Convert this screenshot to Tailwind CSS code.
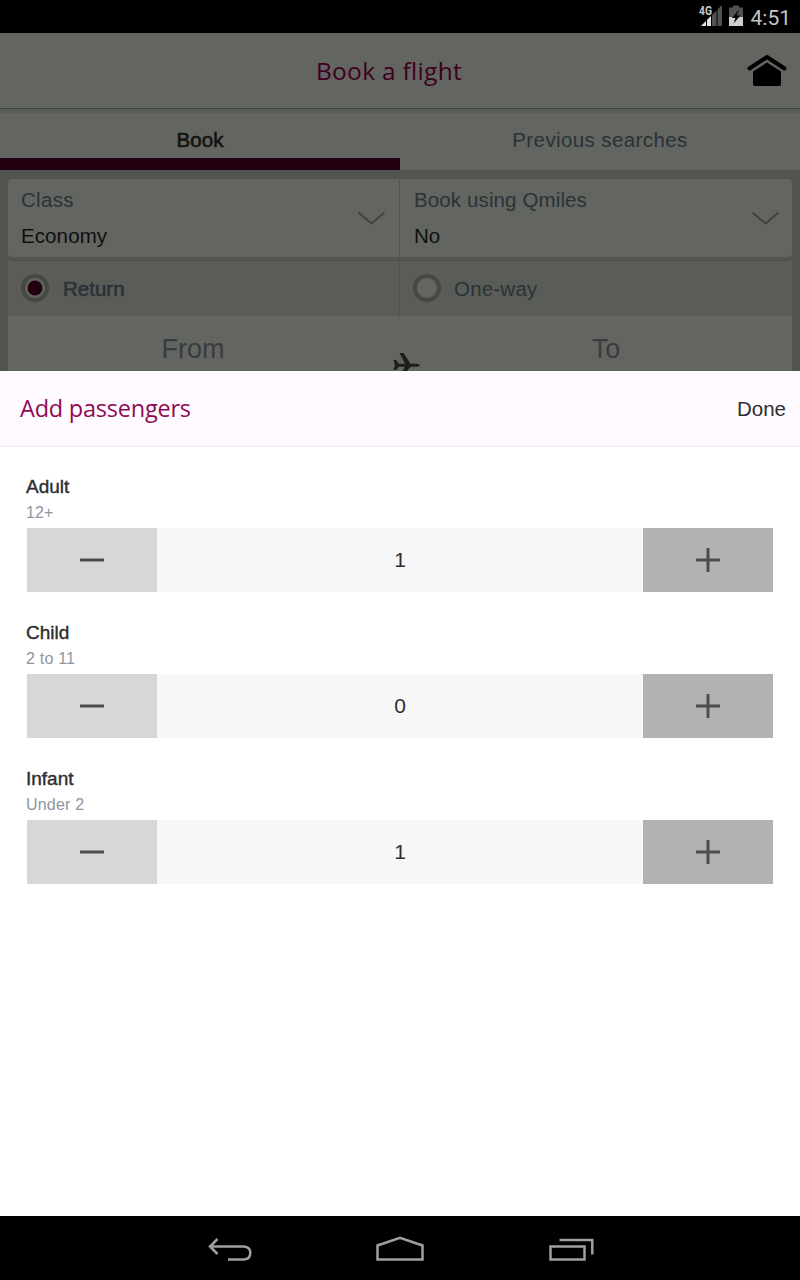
<!DOCTYPE html>
<html lang="en">
<head>
<meta charset="utf-8">
<title>Book a flight</title>
<script src="https://cdn.jsdelivr.net/npm/@tailwindcss/browser@4"></script>
</head>
<body class="bg-black">
<div class="flex h-[1280px] w-[800px] flex-col overflow-hidden bg-white font-['Liberation_Sans',sans-serif] whitespace-nowrap">
  <!-- Status bar -->
  <div class="flex h-[33px] shrink-0 items-center justify-end bg-black pr-[9px]">
    <svg class="h-[33px] w-[48px]" viewBox="696 0 48 33">
      <path d="M722 5V26H701Z" fill="#505250"/>
      <path d="M711 16V26H701Z" fill="#e4e4e4"/>
      <path d="M706.5 15V26M711.5 12V26M717 7V26" stroke="#000" stroke-width="1" fill="none"/>
      <path d="M697 4H712V15.500H697Z" fill="#000"/>
      <text x="699" y="15" font-family="Roboto" font-size="12" font-weight="700" fill="#c8c8c8" textLength="13" lengthAdjust="spacingAndGlyphs">4G</text>
      <path d="M729 7.500H733V5.500H739V7.500H743V17H729Z" fill="#505250"/>
      <path d="M729 17H743V26H729Z" fill="#d0d0d0"/>
      <path d="M738.500 10L732 18H735.500L733.500 23.500L740.500 15.500H736.500L739 10Z" fill="#000"/>
    </svg>
    <span class="ml-[7px] pt-[3px] font-['Roboto'] text-[21px] leading-[33px] text-[#c5c5c5]">4:51</span>
  </div>

  <!-- Booking page, dimmed behind the sheet -->
  <div class="flex h-[338px] shrink-0 flex-col overflow-hidden bg-[#525450]">
    <header class="grid h-[76px] shrink-0 grid-cols-[1fr_auto_1fr] items-center border-b border-[#3e443c] bg-[#636561]">
      <span></span>
      <h1 class="pr-[22px] font-['Open_Sans'] text-[24.5px] leading-[74px] tracking-[0.3px] text-[#3e001e]">Book a flight</h1>
      <svg class="mr-[13px] h-[34px] w-[40px] justify-self-end" viewBox="747 54 40 34">
        <path d="M749.500 68.500L767 57L784.500 68.500" fill="none" stroke="#000" stroke-width="4" stroke-linecap="round" stroke-linejoin="round"/>
        <path d="M767 62.500L781 71.500V84Q781 86 779 86H755Q753 86 753 84V71.500Z" fill="#000"/>
      </svg>
    </header>
    <nav class="grid h-[61px] shrink-0 grid-cols-2 border-t-4 border-[#5a5f58] bg-[#636561] text-center text-[20.500px] leading-[53px]">
      <div class="h-[57px] border-b-[12px] border-[#22000f] tracking-[0.1px] text-[#121412] [-webkit-text-stroke:0.6px_#121412]">Book</div>
      <div class="tracking-[0.4px] text-[#2a3337]">Previous searches</div>
    </nav>
    <div class="flex flex-col gap-[4px] px-[8px] pt-[9px]">
      <div class="grid h-[78px] grid-cols-[392px_392px] rounded-[4px] bg-[#636561] text-[20.500px]">
        <div class="flex items-center justify-between border-r border-[#525450] pr-[13px] pl-[13px]">
          <div>
            <div class="leading-[36px] tracking-[0.3px] text-[#2a3337]">Class</div>
            <div class="leading-[36px] tracking-[0.1px] text-[#0e100e]">Economy</div>
          </div>
          <svg class="h-[14px] w-[28px]" viewBox="0 0 28 14"><path d="M0.500 1.500L13.500 12.500L26.500 1.500" fill="none" stroke="#40423f" stroke-width="2"/></svg>
        </div>
        <div class="flex items-center justify-between pr-[13px] pl-[14px]">
          <div>
            <div class="leading-[36px] tracking-[0.12px] text-[#2a3337]">Book using Qmiles</div>
            <div class="leading-[36px] text-[#0e100e]">No</div>
          </div>
          <svg class="h-[14px] w-[28px]" viewBox="0 0 28 14"><path d="M1.500 1.500L14.500 12.500L27.500 1.500" fill="none" stroke="#40423f" stroke-width="2"/></svg>
        </div>
      </div>
      <div>
        <div class="grid h-[55px] grid-cols-[392px_392px] bg-[#5a5c57] text-[20.500px] leading-[56px] text-[#2a3337]">
          <div class="flex items-start border-r border-[#525450] pl-[13px]">
            <svg class="mt-[13px] size-[28px]" viewBox="0 0 28 28"><circle cx="14" cy="14" r="12" fill="#636561" stroke="#464844" stroke-width="4"/><circle cx="14" cy="14" r="7.500" fill="#22000f"/></svg>
            <span class="ml-[14px] [-webkit-text-stroke:0.6px_#2a3337]">Return</span>
          </div>
          <div class="flex items-start pl-[13px]">
            <svg class="mt-[13px] size-[28px]" viewBox="0 0 28 28"><circle cx="14" cy="14" r="12" fill="#636561" stroke="#464844" stroke-width="4"/></svg>
            <span class="ml-[13px] tracking-[0.2px]">One-way</span>
          </div>
        </div>
        <div class="grid h-[70px] grid-cols-[370px_56px_358px] bg-[#636561] text-center text-[27px] leading-[66px] text-[#3a3b42]">
          <span>From</span>
          <svg class="mt-[35px] ml-[14px] h-[28px] w-[28px]" viewBox="0 0 28 28"><path d="M1.500 9H4L7 12.700H13L7.500 2H11.500L18.500 12.700H25Q28 13.500 28 14.200Q28 15 25 15.700H18.500L10.500 26H7.500L13 15.700H7L4 19H1.500L3 14.200Z" fill="#1c1f1c"/></svg>
          <span class="pr-[14px]">To</span>
        </div>
      </div>
    </div>
  </div>

  <!-- Passenger sheet -->
  <section class="flex h-[845px] shrink-0 flex-col bg-white">
    <div class="flex h-[76px] items-start justify-between border-b border-[#ece8ee] bg-[#fefaff] pr-[14px] pl-[20px]">
      <h2 class="font-['Open_Sans'] text-[23.500px] leading-[74px] tracking-[-0.22px] text-[#8e0a55]">Add passengers</h2>
      <span class="text-[20.500px] leading-[75px] text-[#2e2e30]">Done</span>
    </div>
    <div class="flex flex-col gap-[24px] px-[27px] pt-[23px]">
      <div>
        <div class="-ml-px h-[31px] text-[19px] leading-[33px] text-[#2e2e30] [-webkit-text-stroke:0.4px_#2e2e30]">Adult</div>
        <div class="-ml-px h-[27px] text-[16px] leading-[24px] tracking-[0.1px] text-[#8f96a1]">12+</div>
        <div class="grid h-[64px] grid-cols-[130px_1fr_130px] items-stretch">
          <div class="grid place-items-center bg-[#d7d7d7]"><svg class="size-[24px]" viewBox="0 0 24 24"><path d="M0 12H24" stroke="#4c4c4c" stroke-width="3"/></svg></div>
          <div class="bg-[#f7f7f7] text-center text-[21px] leading-[64px] text-[#2e2e30]">1</div>
          <div class="grid place-items-center bg-[#b4b1b4]"><svg class="size-[24px]" viewBox="0 0 24 24"><path d="M0 12H24M12 0V24" stroke="#4c4e4b" stroke-width="3"/></svg></div>
        </div>
      </div>
      <div>
        <div class="-ml-px h-[31px] text-[19px] leading-[33px] text-[#2e2e30] [-webkit-text-stroke:0.4px_#2e2e30]">Child</div>
        <div class="-ml-px h-[27px] text-[16px] leading-[24px] tracking-[0.2px] text-[#8f96a1]">2 to 11</div>
        <div class="grid h-[64px] grid-cols-[130px_1fr_130px] items-stretch">
          <div class="grid place-items-center bg-[#d7d7d7]"><svg class="size-[24px]" viewBox="0 0 24 24"><path d="M0 12H24" stroke="#4c4c4c" stroke-width="3"/></svg></div>
          <div class="bg-[#f7f7f7] text-center text-[21px] leading-[64px] text-[#2e2e30]">0</div>
          <div class="grid place-items-center bg-[#b4b1b4]"><svg class="size-[24px]" viewBox="0 0 24 24"><path d="M0 12H24M12 0V24" stroke="#4c4e4b" stroke-width="3"/></svg></div>
        </div>
      </div>
      <div>
        <div class="-ml-px h-[31px] text-[19px] leading-[33px] text-[#2e2e30] [-webkit-text-stroke:0.4px_#2e2e30]">Infant</div>
        <div class="-ml-px h-[27px] text-[16px] leading-[24px] tracking-[0.2px] text-[#8f96a1]">Under 2</div>
        <div class="grid h-[64px] grid-cols-[130px_1fr_130px] items-stretch">
          <div class="grid place-items-center bg-[#d7d7d7]"><svg class="size-[24px]" viewBox="0 0 24 24"><path d="M0 12H24" stroke="#4c4c4c" stroke-width="3"/></svg></div>
          <div class="bg-[#f7f7f7] text-center text-[21px] leading-[64px] text-[#2e2e30]">1</div>
          <div class="grid place-items-center bg-[#b4b1b4]"><svg class="size-[24px]" viewBox="0 0 24 24"><path d="M0 12H24M12 0V24" stroke="#4c4e4b" stroke-width="3"/></svg></div>
        </div>
      </div>
    </div>
  </section>

  <!-- System navigation -->
  <div class="flex h-[64px] shrink-0 items-center gap-[124px] bg-black pl-[208px]">
    <svg class="h-[28px] w-[44px]" viewBox="208 1234 44 28" fill="none" stroke="#a0a0a0" stroke-width="2.500"><path d="M210 1246.500H244Q250.300 1247 250.300 1253T244 1259.500H228M217.500 1239L210 1246.500L217.500 1254"/></svg>
    <svg class="h-[28px] w-[48px]" viewBox="376 1234 48 28" fill="none" stroke="#a0a0a0" stroke-width="2.500"><path d="M377.500 1259.500V1245.500L400 1237.700L422.500 1245.500V1259.500Z"/></svg>
    <svg class="h-[28px] w-[46px]" viewBox="548 1234 46 28" fill="none" stroke="#a0a0a0" stroke-width="2.500"><path d="M550.500 1246.500H584.500V1259.500H550.500ZM559.500 1240H592.300V1254.500"/></svg>
  </div>
</div>
</body>
</html>
